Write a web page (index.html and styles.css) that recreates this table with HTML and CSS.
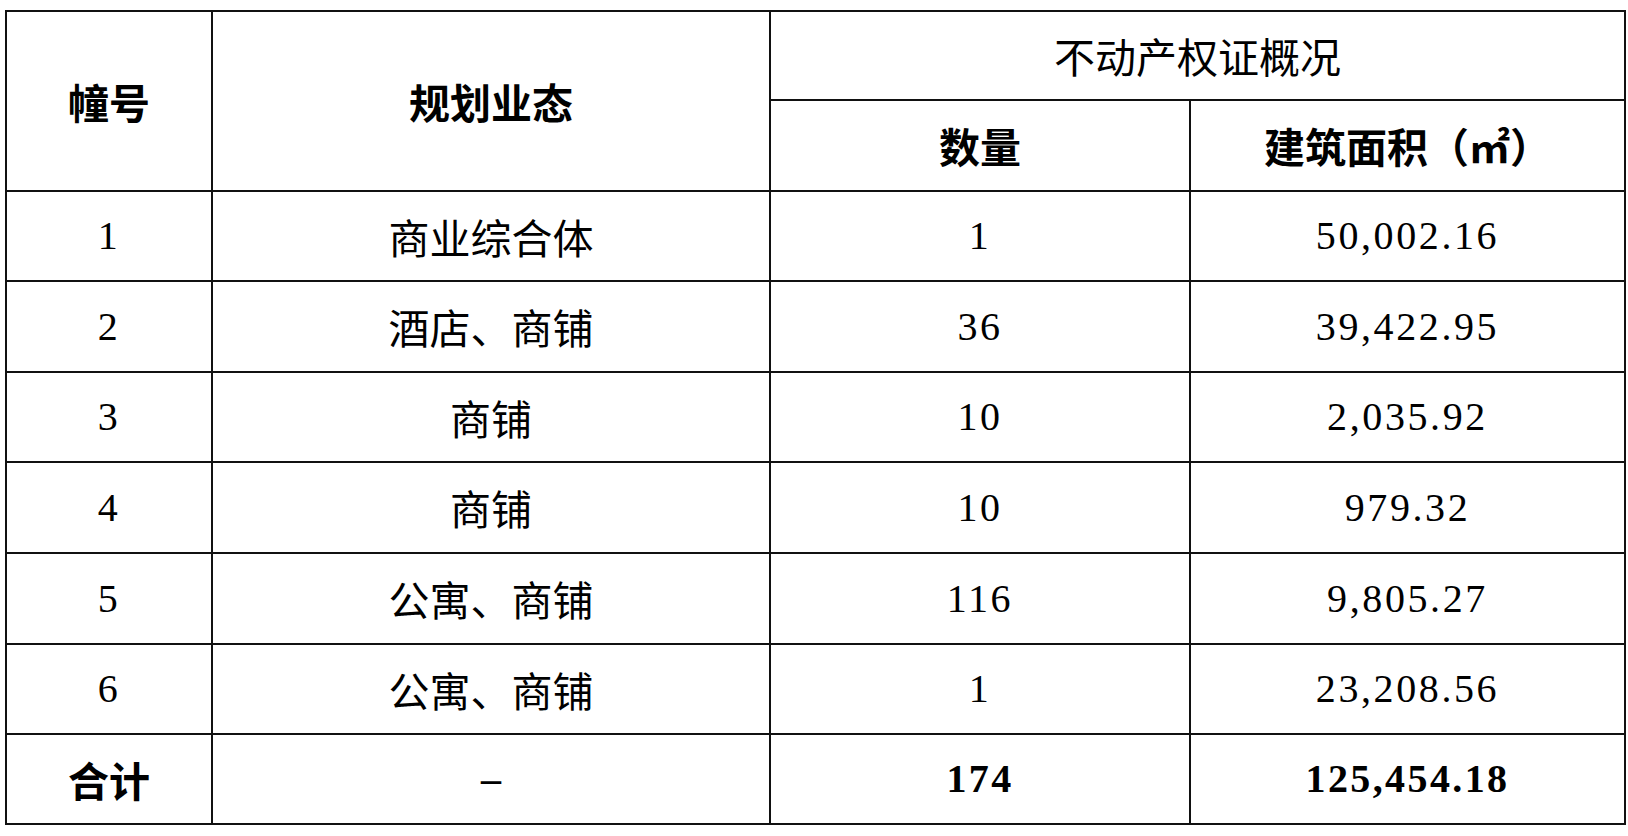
FILE: index.html
```html
<!DOCTYPE html>
<html lang="zh-CN">
<head>
<meta charset="utf-8">
<title>不动产权证概况</title>
<link rel="stylesheet" href="styles.css">
</head>
<body>
<table class="sheet">
  <colgroup>
    <col class="c1"><col class="c2"><col class="c3"><col class="c4">
  </colgroup>
  <thead>
    <tr class="h1">
      <th rowspan="2" class="hd">幢号</th>
      <th rowspan="2" class="hd">规划业态</th>
      <th colspan="2" class="hd light">不动产权证概况</th>
    </tr>
    <tr class="h2">
      <th class="hd">数量</th>
      <th class="hd">建筑面积（㎡）</th>
    </tr>
  </thead>
  <tbody>
    <tr class="r90"><td class="num">1</td><td class="cn">商业综合体</td><td class="num">1</td><td class="num">50,002.16</td></tr>
    <tr class="r91"><td class="num">2</td><td class="cn">酒店、商铺</td><td class="num">36</td><td class="num">39,422.95</td></tr>
    <tr class="r90"><td class="num">3</td><td class="cn">商铺</td><td class="num">10</td><td class="num">2,035.92</td></tr>
    <tr class="r91"><td class="num">4</td><td class="cn">商铺</td><td class="num">10</td><td class="num">979.32</td></tr>
    <tr class="r91"><td class="num">5</td><td class="cn">公寓、商铺</td><td class="num">116</td><td class="num">9,805.27</td></tr>
    <tr class="r90"><td class="num">6</td><td class="cn">公寓、商铺</td><td class="num">1</td><td class="num">23,208.56</td></tr>
    <tr class="r90 total"><td class="hd">合计</td><td class="num dash">–</td><td class="num bold">174</td><td class="num bold">125,454.18</td></tr>
  </tbody>
</table>
</body>
</html>
```

FILE: styles.css
```css
html, body {
  margin: 0;
  padding: 0;
  background: #ffffff;
}

body {
  padding: 10px 0 0 5px;
  color: #000;
}

.sheet {
  border-collapse: collapse;
  table-layout: fixed;
  width: 1619px;
}

.c1 { width: 206px; }
.c2 { width: 558px; }
.c3 { width: 420px; }
.c4 { width: 435px; }

.sheet th,
.sheet td {
  border: 2px solid #111;
  padding: 0;
  text-align: center;
  vertical-align: middle;
  white-space: nowrap;
}

.h1 { height: 89px; }
.h2 { height: 91px; }
.r90 { height: 90px; }
.r91 { height: 91px; }

.hd {
  font-family: "Noto Sans CJK SC", "Noto Sans", sans-serif;
  font-weight: 700;
  font-size: 41px;
  line-height: 1;
}

.hd.light {
  font-weight: 400;
}

.cn {
  font-family: "Noto Sans CJK SC", "Noto Sans", sans-serif;
  font-weight: 400;
  font-size: 41px;
  line-height: 1;
}

.num {
  font-family: "Liberation Serif", "Times New Roman", serif;
  font-size: 40px;
  letter-spacing: 2.6px;
  line-height: 1;
}

.num.bold {
  font-weight: 700;
  letter-spacing: 2.4px;
}

.dash {
  font-weight: 700;
  letter-spacing: 0;
}
```
